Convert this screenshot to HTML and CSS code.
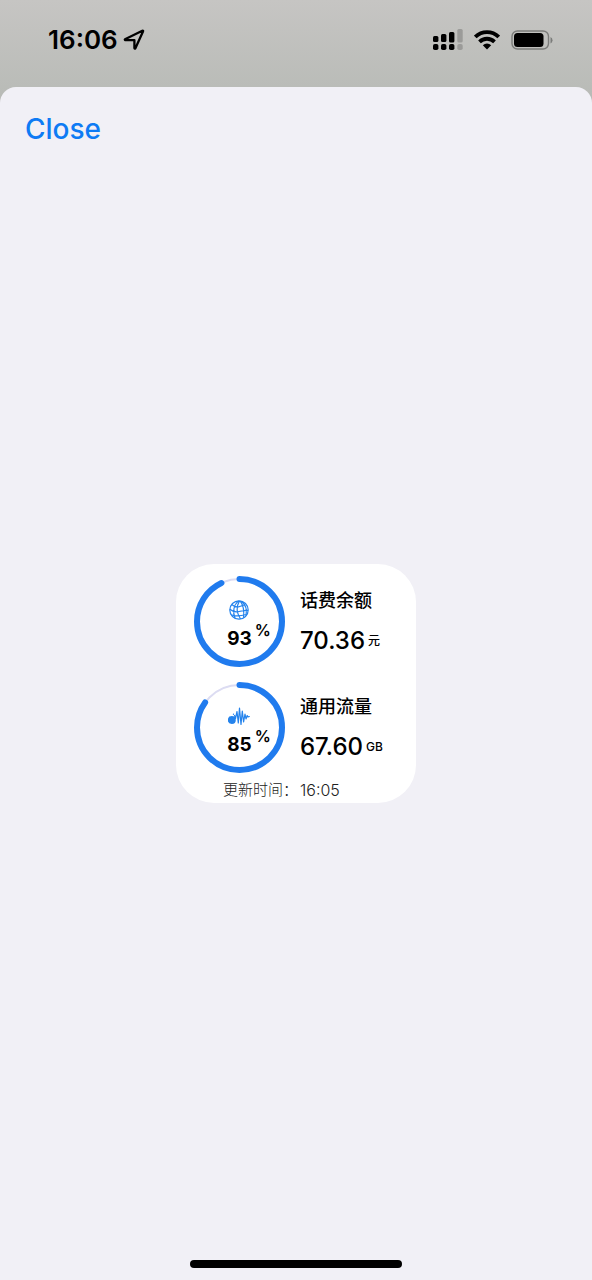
FILE: index.html
```html
<!DOCTYPE html>
<html lang="zh-CN">
<head>
<meta charset="utf-8">
<meta name="viewport" content="width=device-width, initial-scale=1">
<title>Widget</title>
<link rel="stylesheet" href="styles.css">
</head>
<body>
<header class="status-bar">
  <div class="status-left">
    <time class="clock">16:06</time>
    <svg class="location" width="22" height="22" viewBox="0 0 22 22" aria-hidden="true"><path d="M2 10.200 19.300 1.800Q20.500 1.300 20 2.600L12.400 19.200Q11.600 20.200 11.400 19V11.200L3 11.100Q1.300 10.900 2 10.200Z" fill="none" stroke="#000" stroke-width="2.300" stroke-linejoin="round"/></svg>
  </div>
  <div class="status-right">
    <svg width="30" height="22" viewBox="0 0 30 22" aria-hidden="true">
      <rect x="0" y="7" width="5.400" height="6" rx="1.500"/><rect x="8" y="5" width="5.400" height="8" rx="1.500"/><rect x="16" y="3" width="5.400" height="10.500" rx="1.500"/>
      <rect x="0" y="15" width="5.400" height="6" rx="1.800"/><rect x="8" y="15" width="5.400" height="6" rx="1.800"/><rect x="16" y="15" width="5.400" height="6" rx="1.800"/>
      <g fill="#9b9b99"><rect x="24.300" y="0" width="5.400" height="13.500" rx="1.500"/><rect x="24.300" y="15" width="5.400" height="6" rx="1.800"/></g>
    </svg>
    <svg width="26" height="20" viewBox="0 0 26 20" aria-hidden="true"><g fill="none" stroke="#000" stroke-width="3.800"><path d="M1.300 7a16.600 16.600 0 0 1 23.400 0"/><path d="M5.500 11.800a10.700 10.700 0 0 1 15 0"/></g><path d="M13 19.500 8.800 15.300a6 6 0 0 1 8.400 0Z"/></svg>
    <svg width="42" height="20" viewBox="0 0 42 20" aria-hidden="true"><rect x="1" y="1" width="36.500" height="18" rx="5.500" fill="none" stroke="#7b7c7a" stroke-width="1.400"/><rect x="3" y="3" width="29.500" height="14" rx="3.500"/><path d="M39.500 7v6.400q2-1 2-3.200t-2-3.200Z" fill="#7b7c7a"/></svg>
  </div>
</header>
<main class="sheet">
  <div class="toolbar"><button class="close" type="button">Close</button></div>
  <section class="card">
    <div class="metric">
      <div class="gauge">
        <svg class="ring" viewBox="0 0 91 91" aria-hidden="true"><circle class="track" cx="45.500" cy="45.500" r="42.500"/><circle class="progress" cx="45.500" cy="45.500" r="42.500" pathLength="100" stroke-dasharray="93 100" transform="rotate(-90 45.500 45.500)"/></svg>
        <div class="gauge-body">
          <svg width="23" height="20" viewBox="0 0 23 20" aria-hidden="true"><g fill="none" stroke="#2483ec" stroke-width="1.200"><circle cx="11" cy="10" r="9.200"/><path d="M10.500.9C5.500 5 4.500 12 7 18.200M11.500.9C8.500 6 8.500 13 12.500 19M12 .9C15.500 5 16.500 9 15.500 17.800M13.500 1.200C17 4 19.300 9 18 15.500M3.800 4.500Q7 7.500 10.500 6.800T17 4.300M1.900 9.300Q6 12.800 11 11.500T20.100 10.300M3.800 15Q9 17 18.300 14.500"/></g></svg>
          <div class="percent">93<span class="sign">%</span></div>
        </div>
      </div>
      <div class="detail">
        <h2 class="label">话费余额</h2>
        <p class="value">70.36<span class="unit">元</span></p>
      </div>
    </div>
    <div class="metric">
      <div class="gauge">
        <svg class="ring" viewBox="0 0 91 91" aria-hidden="true"><circle class="track" cx="45.500" cy="45.500" r="42.500"/><circle class="progress" cx="45.500" cy="45.500" r="42.500" pathLength="100" stroke-dasharray="85 100" transform="rotate(-90 45.500 45.500)"/></svg>
        <div class="gauge-body">
          <svg width="23" height="20" viewBox="0 0 23 20" aria-hidden="true"><circle cx="3.800" cy="14" r="4" fill="#2483ec"/><circle cx="5.500" cy="8.200" r=".7" fill="#2483ec"/><path d="M6.500 9.500 7.500 12.500 9 5.500 10.300 17 11.500 2 13 18.500 14.300 5 15.600 16 17 8 18 13 19.200 9.500 20 11 21.300 10.500" fill="none" stroke="#2483ec" stroke-width="1.200" stroke-linejoin="round" stroke-linecap="round"/></svg>
          <div class="percent">85<span class="sign">%</span></div>
        </div>
      </div>
      <div class="detail">
        <h2 class="label">通用流量</h2>
        <p class="value">67.60<span class="unit unit-latin">GB</span></p>
      </div>
    </div>
    <footer class="updated"><span>更新时间：</span><time class="updated-time">16:05</time></footer>
  </section>
  <div class="home"><div class="home-bar"></div></div>
</main>
</body>
</html>
```
FILE: styles.css
```css
* { box-sizing: border-box; }
body {
  margin: 0;
  min-height: 100vh;
  display: flex;
  flex-direction: column;
  color: #000;
  background: linear-gradient(#c6c5c3, #babcb8 87px, #b6b8b4 110px);
  font-family: Inter, "Noto Sans CJK SC", sans-serif;
}
.status-bar {
  display: flex;
  justify-content: space-between;
  align-items: center;
  height: 87px;
  padding: 0 39px 8px 48px;
}
.status-left { display: flex; align-items: center; gap: 5px; }
.clock { font-size: 26px; font-weight: 600; line-height: 32px; }
.status-right { display: flex; align-items: center; gap: 11px; }
.sheet {
  flex: 1;
  display: grid;
  grid-template-rows: 1fr auto 1fr;
  justify-items: center;
  border-radius: 16px 16px 0 0;
  background: #f1f0f6;
}
.toolbar { justify-self: stretch; padding: 24px 25px; }
.close {
  padding: 0;
  border: 0;
  background: none;
  color: #0e7bf4;
  font: 500 28px/36px Inter, sans-serif;
  cursor: pointer;
}
.card {
  width: 240px;
  padding: 12px 18px 2px;
  border-radius: 38px;
  background: #fff;
}
.metric { display: flex; align-items: center; gap: 15px; margin-bottom: 15px; }
.metric + .metric { margin-bottom: 6px; }
.gauge { display: grid; width: 91px; height: 91px; }
.ring, .gauge-body { grid-area: 1 / 1; }
.ring { width: 100%; height: 100%; }
.ring circle { fill: none; }
.track { stroke: #dcdcf2; stroke-width: 2; }
.progress { stroke: #207bee; stroke-width: 6; stroke-linecap: round; }
.gauge-body { display: flex; flex-direction: column; align-items: center; padding-top: 24px; gap: 7px; }
.percent { position: relative; font-size: 19px; font-weight: 700; line-height: 24px; }
.sign { position: absolute; left: 100%; top: -7px; padding-left: 3px; font-size: 16px; font-weight: 600; line-height: 20px; }
.detail { display: grid; gap: 14px; }
.label { margin: 0; font: 500 18px/24px "Noto Sans CJK SC", sans-serif; }
.value { display: flex; align-items: center; gap: 3px; margin: 0; font-size: 24px; font-weight: 500; line-height: 32px; }
.unit { font-size: 12px; line-height: 16px; }
.unit-latin { font-size: 12px; }
.updated { display: flex; align-items: center; gap: 2px; padding-left: 29px; font-size: 15px; font-weight: 300; line-height: 22px; color: #222; }
.updated-time { font-size: 16px; }
.home { align-self: end; display: flex; justify-content: center; width: 100%; padding-bottom: 12px; }
.home-bar { width: 212px; height: 8px; border-radius: 4px; background: #000; }
```
